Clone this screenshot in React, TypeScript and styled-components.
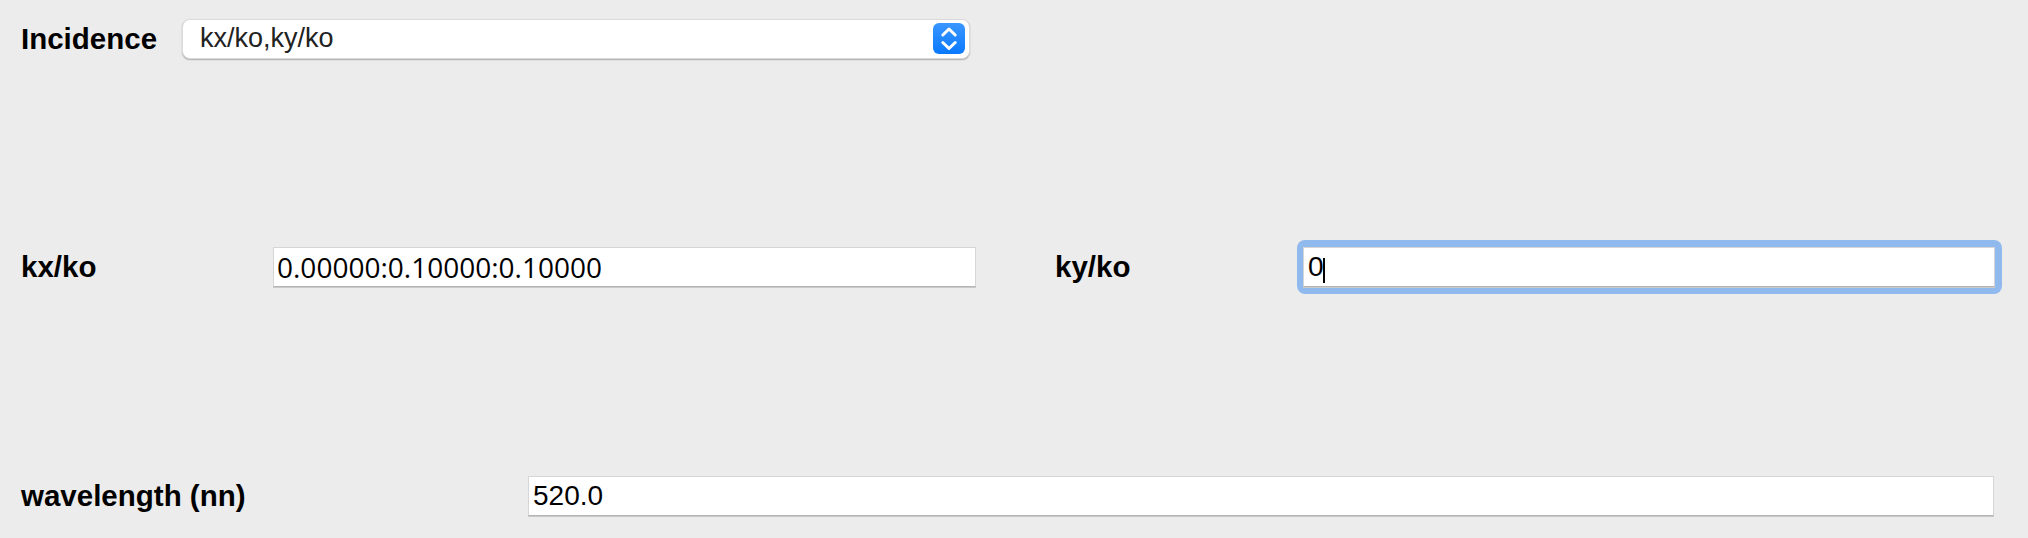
import React, { useEffect, useRef } from "react";
import styled, { createGlobalStyle } from "styled-components";

const GlobalStyle = createGlobalStyle`
  html, body {
    margin: 0;
    padding: 0;
    background: #ececec;
  }
  body {
    font-family: "Liberation Sans", Arial, sans-serif;
  }
`;

const Page = styled.div`
  box-sizing: border-box;
  width: 2028px;
  height: 538px;
  padding: 19px 0 0 21px;
  display: flex;
  flex-direction: column;
  gap: 181px;
  background: #ececec;
  overflow: hidden;
`;

const Row = styled.div<{ $offset?: number }>`
  display: flex;
  align-items: center;
  margin-top: ${(p) => p.$offset ?? 0}px;
`;

const Field = styled.div<{ $gapBefore?: number }>`
  display: flex;
  align-items: center;
  margin-left: ${(p) => p.$gapBefore ?? 0}px;
`;

const Label = styled.label<{ $width: number }>`
  width: ${(p) => p.$width}px;
  flex: none;
  font-family: "Liberation Sans", Arial, Helvetica, sans-serif;
  font-weight: 700;
  font-size: 29.5px;
  color: #000;
  white-space: nowrap;
`;

const TextInput = styled.input<{ $width: number; $face?: "open" | "helv"; $hideCaret?: boolean }>`
  box-sizing: border-box;
  width: ${(p) => p.$width}px;
  height: 40px;
  margin: 0;
  padding: 0 0 0 ${(p) => (p.$face === "open" ? 3 : 4)}px;
  background: #fff;
  border: 1px solid #d6d6d6;
  border-bottom: 1px solid #b4b4b4;
  box-shadow: 0 1px 0 #c9c9c9;
  border-radius: 0;
  font-family: ${(p) =>
    p.$face === "open"
      ? `"Open Sans", "Noto Sans", sans-serif`
      : `"Liberation Sans", Arial, sans-serif`};
  font-size: 28px;
  color: #000;
  caret-color: ${(p) => (p.$hideCaret ? "transparent" : "#000")};
  outline: none;
`;

const FocusRing = styled.div`
  position: relative;
  box-sizing: border-box;
  padding: 7px 7px 7px 6px;
  border-radius: 8px;
  background: #90b9ee;
  display: flex;
`;

const Caret = styled.span`
  position: absolute;
  left: 26px;
  top: 18px;
  width: 2px;
  height: 25px;
  background: #000;
  pointer-events: none;
`;

const PopUp = styled.div<{ $width: number }>`
  box-sizing: border-box;
  width: ${(p) => p.$width}px;
  height: 40px;
  display: flex;
  align-items: center;
  justify-content: space-between;
  padding: 0 4px 1px 17px;
  background: #fff;
  border-radius: 8px;
  border: 1px solid #dadada;
  box-shadow: 0 1px 1.5px rgba(0, 0, 0, 0.28);
`;

const PopUpText = styled.span`
  font-family: "Liberation Sans", Arial, Helvetica, sans-serif;
  font-size: 27px;
  color: #222;
  white-space: nowrap;
`;

const StepperButton = styled.div`
  width: 32px;
  height: 31px;
  border-radius: 6px;
  background: linear-gradient(#3b96ff, #0a79ff);
  display: flex;
  align-items: center;
  justify-content: center;
  flex: none;
`;

function Chevrons() {
  return (
    <svg width="32" height="31" viewBox="0 0 32 31" fill="none">
      <path
        d="M9.8 12 L16 6 L22.2 12"
        stroke="#fff"
        strokeWidth="3"
        strokeLinecap="round"
        strokeLinejoin="round"
      />
      <path
        d="M9.8 19.5 L16 25.5 L22.2 19.5"
        stroke="#fff"
        strokeWidth="3"
        strokeLinecap="round"
        strokeLinejoin="round"
      />
    </svg>
  );
}

export default function App() {
  const kyRef = useRef<HTMLInputElement>(null);

  useEffect(() => {
    const el = kyRef.current;
    if (el) {
      el.focus();
      const n = el.value.length;
      el.setSelectionRange(n, n);
    }
  }, []);

  return (
    <>
      <GlobalStyle />
      <Page>
        <Row>
          <Label $width={161}>Incidence</Label>
          <PopUp $width={788}>
            <PopUpText>kx/ko,ky/ko</PopUpText>
            <StepperButton>
              <Chevrons />
            </StepperButton>
          </PopUp>
        </Row>

        <Row>
          <Field>
            <Label $width={252}>kx/ko</Label>
            <TextInput
              $width={703}
              $face="open"
              defaultValue="0.00000:0.10000:0.10000"
            />
          </Field>
          <Field $gapBefore={79}>
            <Label $width={242}>ky/ko</Label>
            <FocusRing>
              <TextInput ref={kyRef} $width={692} $hideCaret defaultValue="0" />
              <Caret />
            </FocusRing>
          </Field>
        </Row>

        <Row $offset={1}>
          <Label $width={507}>wavelength (nn)</Label>
          <TextInput $width={1466} defaultValue="520.0" />
        </Row>
      </Page>
    </>
  );
}
